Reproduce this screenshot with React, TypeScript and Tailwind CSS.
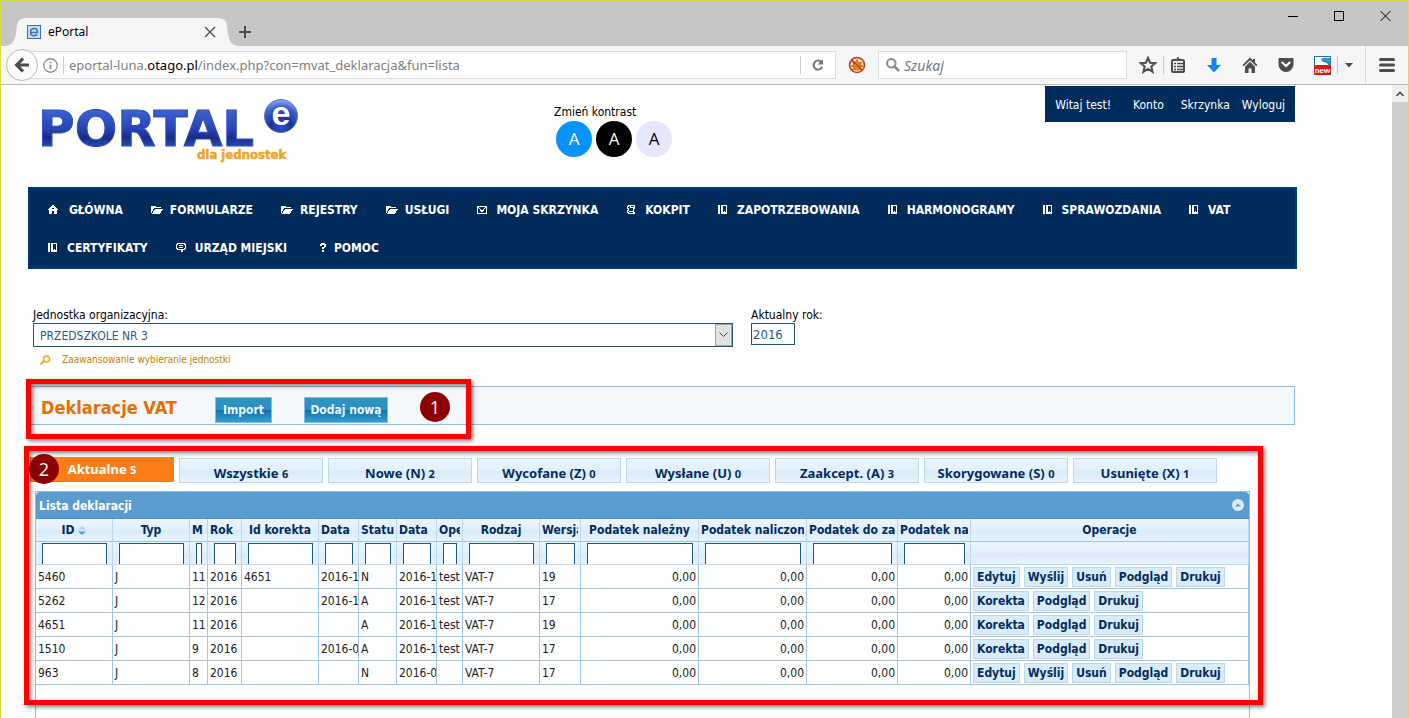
import type { ReactNode } from 'react';
import { clsx } from 'clsx';

type NavIconName = 'home' | 'folder' | 'mail' | 'script' | 'book' | 'chat' | 'help';

const navItems: { label: string; icon: NavIconName }[] = [
  { label: 'GŁÓWNA', icon: 'home' },
  { label: 'FORMULARZE', icon: 'folder' },
  { label: 'REJESTRY', icon: 'folder' },
  { label: 'USŁUGI', icon: 'folder' },
  { label: 'MOJA SKRZYNKA', icon: 'mail' },
  { label: 'KOKPIT', icon: 'script' },
  { label: 'ZAPOTRZEBOWANIA', icon: 'book' },
  { label: 'HARMONOGRAMY', icon: 'book' },
  { label: 'SPRAWOZDANIA', icon: 'book' },
  { label: 'VAT', icon: 'book' },
  { label: 'CERTYFIKATY', icon: 'book' },
  { label: 'URZĄD MIEJSKI', icon: 'chat' },
  { label: 'POMOC', icon: 'help' },
];

const tabs = [
  { label: 'Aktualne', count: 5 },
  { label: 'Wszystkie', count: 6 },
  { label: 'Nowe (N)', count: 2 },
  { label: 'Wycofane (Z)', count: 0 },
  { label: 'Wysłane (U)', count: 0 },
  { label: 'Zaakcept. (A)', count: 3 },
  { label: 'Skorygowane (S)', count: 0 },
  { label: 'Usunięte (X)', count: 1 },
];

const columns = [
  { label: 'ID', width: 'w-[77px]', center: true },
  { label: 'Typ', width: 'w-[77px]', center: true },
  { label: 'M', width: 'w-[18px]' },
  { label: 'Rok', width: 'w-[34px]' },
  { label: 'Id korekta', width: 'w-[77px]', center: true },
  { label: 'Data', width: 'w-[40px]' },
  { label: 'Status', width: 'w-[38px]' },
  { label: 'Data', width: 'w-[40px]' },
  { label: 'Operator', width: 'w-[26px]' },
  { label: 'Rodzaj', width: 'w-[77px]', center: true },
  { label: 'Wersja', width: 'w-[41px]' },
  { label: 'Podatek należny', width: 'w-[118px]', center: true },
  { label: 'Podatek naliczony', width: 'w-[108px]' },
  { label: 'Podatek do zapłaty', width: 'w-[91px]' },
  { label: 'Podatek nadpłacony', width: 'w-[73px]' },
];

const editable = ['Edytuj', 'Wyślij', 'Usuń', 'Podgląd', 'Drukuj'];
const locked = ['Korekta', 'Podgląd', 'Drukuj'];

const rows = [
  { cells: ['5460', 'J', '11', '2016', '4651', '2016-1', 'N', '2016-1', 'test', 'VAT-7', '19'], actions: editable },
  { cells: ['5262', 'J', '12', '2016', '', '2016-1', 'A', '2016-1', 'test', 'VAT-7', '17'], actions: locked },
  { cells: ['4651', 'J', '11', '2016', '', '', 'A', '2016-1', 'test', 'VAT-7', '19'], actions: locked },
  { cells: ['1510', 'J', '9', '2016', '', '2016-0', 'A', '2016-1', 'test', 'VAT-7', '17'], actions: locked },
  { cells: ['963', 'J', '8', '2016', '', '', 'N', '2016-0', '', 'VAT-7', '17'], actions: editable },
];

const amounts = ['0,00', '0,00', '0,00', '0,00'];

const headerGradient = 'bg-[linear-gradient(#e9f4fd_0%,#e3f0fb_48%,#d8ebf9_52%,#e6f3fd_100%)]';

function NavIcon({ name }: { name: NavIconName }) {
  const shapes: Record<NavIconName, ReactNode> = {
    home: <path d="M4 0h2v1h1v1h1v1h1v1h1v1H9v4H6V6H4v3H1V5H0V4h1V3h1V2h1V1h1zM4 3h2v1H4z" fill="currentColor" fillRule="evenodd" />,
    folder: <path d="M0 1h5v1h5v1H3v1H2v2H1v2H0zM4 4h8v1h-1v1h-1v2H9v1H1V8h1V6h1V5h1z" fill="currentColor" />,
    mail: <path d="M.5 1.500h9v7h-9zM1.500 2.500l3.500 4L8.500 2.500" fill="none" stroke="currentColor" />,
    script: <path d="M2.500 3.500h-1v-2h1v-1h6v3h-1v4h1v1h-6v-1h-1v-2h1zM4.500.5v2h3M2.500 6.500h4" fill="none" stroke="currentColor" />,
    book: <path d="M0 0h2v9H0zM3 0h6v9H3zM5 1v6h1V6h1v1h1V1z" fill="currentColor" fillRule="evenodd" />,
    chat: <path d="M1.500.5h7v1h1v4h-1v1h-2v2h-1v-2h-4v-1h-1v-4h1zM3 2.500h4M3 4.500h4" fill="none" stroke="currentColor" />,
    help: <path d="M6 0h4v1h1v3h-1v1H9v1H7V4h2V2H7v1H5V1h1zM7 7h2v2H7z" fill="currentColor" />,
  };

  return (
    <svg viewBox="0 0 12 10" width="12" height="10" shapeRendering="crispEdges" className={clsx('shrink-0', name === 'home' && 'mr-0.5')} aria-hidden="true">
      {shapes[name]}
    </svg>
  );
}

function Logo() {
  return (
    <svg viewBox="0 0 262 72" width="262" height="72" role="img" aria-label="ePortal dla jednostek">
      <defs>
        <linearGradient id="logo-blue" x1="0" y1="0" x2="0" y2="1">
          <stop offset="0.2" stopColor="#3a5fd0" />
          <stop offset="0.5" stopColor="#2744b4" />
          <stop offset="0.65" stopColor="#182c85" />
          <stop offset="0.85" stopColor="#2d56c4" />
        </linearGradient>
        <radialGradient id="logo-ball" cx="0.5" cy="0.85" r="0.9">
          <stop offset="0" stopColor="#2a50c8" />
          <stop offset="0.35" stopColor="#1c3596" />
          <stop offset="0.7" stopColor="#3a62cf" />
          <stop offset="1" stopColor="#a9bdf0" />
        </radialGradient>
      </defs>
      <text x="-4" y="49" fontFamily="'DejaVu Sans', sans-serif" fontWeight="700" fontSize="50" fill="url(#logo-blue)" stroke="#2d50bd" strokeWidth="1">
        PORTAL
      </text>
      <circle cx="239" cy="19" r="18" fill="#ffffff" />
      <circle cx="239" cy="19" r="16.500" fill="url(#logo-ball)" stroke="#5577c8" />
      <text x="239" y="28" textAnchor="middle" fontFamily="'Liberation Sans', sans-serif" fontWeight="700" fontSize="34" fill="#ffffff">
        e
      </text>
      <text x="155" y="62" fontFamily="'DejaVu Sans Condensed', 'DejaVu Sans', sans-serif" fontWeight="700" fontSize="13" fill="#eda52a" stroke="#eda52a" strokeWidth="0.5">
        dla jednostek
      </text>
    </svg>
  );
}

function BrowserTabs() {
  return (
    <div className="flex h-[45px] items-end bg-[#c6c6c6] text-[#4a4a4a]">
      <svg viewBox="0 0 22 28" width="22" height="28" className="ml-1 shrink-0" aria-hidden="true">
        <path d="M0 28C14 27 10 10 13 4c2-3 5-4 9-4v28z" fill="#f6f6f6" />
      </svg>
      <div className="flex h-7 w-[190px] items-center bg-[#f6f6f6]">
        <svg viewBox="0 0 14 14" width="14" height="14" aria-hidden="true">
          <rect x="0.5" y="0.5" width="13" height="13" fill="#c9dcf5" stroke="#3c6db5" />
          <path d="M4 7.500h6.500c0-2.500-1.300-4-3.500-4S3.500 5 3.500 7.300 5 10.700 7 10.700c1.500 0 2.600-.5 3.200-1.500" fill="none" stroke="#3a74a8" strokeWidth="1.500" />
        </svg>
        <span className="ml-[7px] font-['Noto_Sans',sans-serif] text-xs text-black">ePortal</span>
        <button type="button" aria-label="Zamknij kartę" className="mr-px ml-auto">
          <svg viewBox="0 0 12 12" width="12" height="12" stroke="currentColor" strokeWidth="1.300">
            <path d="M1 1l10 10M11 1L1 11" />
          </svg>
        </button>
      </div>
      <svg viewBox="0 0 22 28" width="22" height="28" className="shrink-0" aria-hidden="true">
        <path d="M22 28C8 27 12 10 9 4 7 1 4 0 0 0v28z" fill="#f6f6f6" />
      </svg>
      <button type="button" aria-label="Nowa karta" className="mb-2">
        <svg viewBox="0 0 12 12" width="12" height="12" stroke="currentColor" strokeWidth="2">
          <path d="M6 0v12M0 6h12" />
        </svg>
      </button>
      <div className="mr-[17px] ml-auto flex gap-[35px] self-start pt-[9px] text-black">
        <svg viewBox="0 0 11 12" width="11" height="12" stroke="currentColor" shapeRendering="crispEdges">
          <path d="M0 6.500h10" />
        </svg>
        <svg viewBox="0 0 11 12" width="11" height="12" fill="none" stroke="currentColor" shapeRendering="crispEdges">
          <rect x="0.5" y="1.500" width="9" height="9" />
        </svg>
        <svg viewBox="0 0 11 12" width="11" height="12" stroke="currentColor">
          <path d="M.5 1l10 10M10.500 1L.5 11" />
        </svg>
      </div>
    </div>
  );
}

function Toolbar() {
  return (
    <div className="flex h-[39px] items-center border-b border-[#bcbcbc] bg-[#f6f6f6] font-['Noto_Sans',sans-serif] text-[#4d4d4d]">
      <button type="button" aria-label="Wstecz" className="z-10 ml-[5px] flex size-8 shrink-0 items-center justify-center rounded-full border border-[#b9b9b9] bg-[#fbfbfb]">
        <svg viewBox="0 0 16 16" width="16" height="16" fill="none" stroke="currentColor" strokeWidth="3.200">
          <path d="M9 1.500L2.700 8 9 14.500M3 8h12" />
        </svg>
      </button>
      <div className="-ml-2 flex h-7 flex-1 items-center border border-[#dcdcdc] bg-white pl-3">
        <svg viewBox="0 0 14 14" width="15" height="15" fill="none" stroke="#8f8f8f" strokeWidth="1.200">
          <circle cx="7" cy="7" r="6.300" />
          <path d="M7 6v4.500M7 3.300v1.500" strokeWidth="1.600" />
        </svg>
        <div className="mr-[5px] ml-[5px] h-[18px] w-px bg-[#cfcfcf]" />
        <div className="pt-0.5 text-[13px] text-[#808080]">
          eportal-luna.<span className="text-black">otago.pl</span>/index.php?con=mvat_deklaracja&amp;fun=lista
        </div>
        <button type="button" aria-label="Odśwież" className="ml-auto flex h-[18px] items-center border-l border-[#cfcfcf] px-[10px]">
          <svg viewBox="0 0 14 14" width="14" height="14" fill="none" stroke="#777777" strokeWidth="2">
            <path d="M10.600 4.200A4.500 4.500 0 1 0 11.200 9" />
            <path d="M12 1v5.500H6.500z" fill="#777777" stroke="none" />
          </svg>
        </button>
      </div>
      <svg viewBox="0 0 18 18" width="18" height="18" className="mx-3 shrink-0" aria-hidden="true">
        <circle cx="9" cy="9" r="7.200" fill="#f3e3cf" />
        <ellipse cx="9" cy="10" rx="4.500" ry="4.800" fill="#e08a10" />
        <path d="M4 6l3 2M3 10h3M4 14l3-2M14 6l-3 2M15 10h-3M14 14l-3-2M9 3v3" stroke="#b3721c" strokeWidth="1.400" />
        <circle cx="9" cy="9" r="7.500" fill="none" stroke="#c9332b" strokeWidth="1.600" />
        <path d="M3.700 3.700l10.600 10.600" stroke="#c9332b" strokeWidth="1.600" />
      </svg>
      <label className="flex h-7 w-[249px] items-center border border-[#dcdcdc] bg-white pl-[7px]">
        <svg viewBox="0 0 14 14" width="14" height="14" fill="none" stroke="#8b8b8b" strokeWidth="2" className="shrink-0">
          <circle cx="5.300" cy="5.300" r="4.200" />
          <path d="M8.500 8.500l4.500 4.500" strokeWidth="2.600" />
        </svg>
        <input aria-label="Szukaj" placeholder="Szukaj" className="ml-1 w-full bg-transparent pt-0.5 text-sm italic outline-none placeholder:text-[#7a7a7a]" />
      </label>
      <div className="flex shrink-0 items-center pl-3">
        <svg viewBox="0 0 18 18" width="18" height="18" fill="none" stroke="currentColor" strokeWidth="2">
          <path d="M9 1.900l2.100 4.900 5.200.4-4 3.400 1.300 5.200L9 13l-4.600 2.800 1.300-5.200-4-3.400 5.200-.4z" />
        </svg>
        <div className="mx-[6px] h-[18px] w-px bg-[#c6c6c6]" />
        <svg viewBox="0 0 16 18" width="16" height="18" fill="none" stroke="currentColor" strokeWidth="2">
          <rect x="2" y="4" width="12" height="12" rx="1" />
          <path d="M5 3.500h6M8 1v3M4 7.500h2M7 7.500h6M4 10.500h2M7 10.500h6M4 13.500h2M7 13.500h6" strokeWidth="1.700" />
        </svg>
        <svg viewBox="0 0 16 18" width="16" height="18" className="ml-5">
          <path d="M5.500 2h5v7H15l-7 7.500L1 9h4.500z" fill="#1a82ee" />
        </svg>
        <svg viewBox="0 0 16 18" width="16" height="18" className="ml-5" fill="currentColor">
          <path d="M8 1.500L.5 9l1.300 1.300L8 4.200l6.200 6.100L15.500 9l-2.500-2.500V3h-2v1.500zM8 5.800l-5 5V17h3.500v-4.500h3V17H13v-6.200z" />
        </svg>
        <svg viewBox="0 0 16 18" width="16" height="18" className="ml-5">
          <path d="M1.500 2h13a1 1 0 0 1 1 1v5.500a7.500 7.500 0 0 1-15 0V3a1 1 0 0 1 1-1z" fill="#4d4d4d" />
          <path d="M4.300 6.500L8 10l3.700-3.500" fill="none" stroke="#ffffff" strokeWidth="2" strokeLinecap="round" />
        </svg>
        <svg viewBox="0 0 17 19" width="17" height="19" className="ml-5">
          <rect width="17" height="19" fill="#1579b8" />
          <path d="M1 1h15v1.500C10 2 6 3 8 5c2 1.500 6 1 7 5H1z" fill="#ffffff" />
          <path d="M7 3c2-1.500 5-1.500 9-1v7c-1-3-4-3.500-6-4-1.500-.3-3-.8-3-2z" fill="#2f9bd0" />
          <rect x="0" y="9" width="17" height="10" rx="2" fill="#ee1111" />
          <text x="8.500" y="17" textAnchor="middle" fontFamily="'Liberation Sans', sans-serif" fontWeight="700" fontSize="8" fill="#ffffff">
            new
          </text>
        </svg>
        <div className="ml-[6px] h-[18px] w-px bg-[#c6c6c6]" />
        <svg viewBox="0 0 8 5" width="8" height="5" className="ml-[7px]">
          <path d="M0 0h8L4 4.500z" fill="#4d4d4d" />
        </svg>
        <button type="button" aria-label="Menu" className="ml-3 flex h-[38px] items-center border-l border-[#dadada] pr-[13px] pl-[13px]">
          <svg viewBox="0 0 16 16" width="16" height="16" stroke="currentColor" strokeWidth="3" strokeLinecap="round">
            <path d="M1.500 2.500h13M1.500 8h13M1.500 13.500h13" />
          </svg>
        </button>
      </div>
    </div>
  );
}

function NumberBadge({ value, className }: { value: number; className: string }) {
  return (
    <span className={clsx("absolute z-20 flex size-[30px] items-center justify-center rounded-full bg-[#8b0000] font-['Open_Sans',sans-serif] text-lg text-white", className)}>
      {value}
    </span>
  );
}

function Highlight({ className }: { className: string }) {
  return <div className={clsx('pointer-events-none absolute z-10 border-5 border-[#fe0000] shadow-[2px_2px_4px_rgba(0,0,0,0.5),inset_2px_2px_4px_rgba(0,0,0,0.5)]', className)} />;
}

function Header() {
  return (
    <header className="flex h-[102px] items-start">
      <div className="w-[526px] shrink-0 pt-3 pl-[14px]">
        <Logo />
      </div>
      <div className="pt-[19px]">
        <p className="leading-4">Zmień kontrast</p>
        <div className="flex gap-1 pt-px pl-0.5 font-['Open_Sans',sans-serif] text-[17px]">
          <button type="button" className="size-9 rounded-full bg-[#0693fb] text-white">A</button>
          <button type="button" className="size-9 rounded-full bg-black text-white">A</button>
          <button type="button" className="size-9 rounded-full bg-[#e4e7fd] text-black">A</button>
        </div>
      </div>
      <div className="mt-px mr-0.5 ml-auto flex h-9 items-center bg-[#002b5b] px-[10px] pt-0.5 text-white">
        <span className="mr-[22px]">Witaj test!</span>
        <a href="#konto" className="mr-[17px]">Konto</a>
        <a href="#skrzynka" className="mr-3">Skrzynka</a>
        <a href="#wyloguj">Wyloguj</a>
      </div>
    </header>
  );
}

function Navigation() {
  return (
    <nav className="flex flex-wrap gap-x-7 border-2 border-[#003d78] bg-[#002b5b] px-[18px] pt-0.5 font-bold text-white">
      {navItems.map((item) => (
        <a key={item.label} href="#nav" className="flex h-[38px] items-center gap-[7px]">
          <NavIcon name={item.icon} />
          {item.label}
        </a>
      ))}
    </nav>
  );
}

function UnitForm() {
  return (
    <form className="flex gap-[18px] pt-[39px] pl-[5px]">
      <div className="w-[700px]">
        <label htmlFor="unit" className="block leading-[15px]">Jednostka organizacyjna:</label>
        <div className="relative">
          <select id="unit" className="block h-6 w-full appearance-none border border-[#1f5876] bg-white pt-px pl-[6px] text-[#2d5a80]">
            <option>PRZEDSZKOLE NR 3</option>
          </select>
          <span className="pointer-events-none absolute inset-y-px right-px flex w-[17px] items-center justify-center border border-[#a5a5a5] bg-[#e2e2e2]">
            <svg viewBox="0 0 9 6" width="9" height="6" fill="none" stroke="#444444">
              <path d="M.5.5l4 4 4-4" />
            </svg>
          </span>
        </div>
        <a href="#zaawansowane" className="flex h-[26px] items-center gap-[11px] pl-[7px] text-[10px] text-[#c08005]">
          <svg viewBox="0 0 11 10" width="11" height="10" fill="none" stroke="#f5a623" strokeWidth="1.500">
            <circle cx="6.500" cy="4" r="3" />
            <path d="M4 6L.5 9.500" strokeWidth="2" />
          </svg>
          Zaawansowanie wybieranie jednostki
        </a>
      </div>
      <div>
        <label htmlFor="year" className="block leading-[15px]">Aktualny rok:</label>
        <input id="year" defaultValue="2016" className="block h-[22px] w-11 border border-[#1f5876] bg-white px-[1px] text-[13px] text-[#2d5a80]" />
      </div>
    </form>
  );
}

function TitleBar() {
  const button = 'h-[26px] border border-[#7cc0e6] bg-[linear-gradient(#2f93c4_0%,#2b8fc1_50%,#0578b0_50%,#3b9aca_100%)] pt-px font-bold whitespace-nowrap text-[#eaf4fb]';

  return (
    <section className="relative mr-0.5 flex h-[39px] items-center border border-[#8cbfe6] bg-[#f4f8fa] pt-2 pl-3">
      <h1 className="w-[174px] pb-1 text-lg font-bold text-[#e17009]">Deklaracje VAT</h1>
      <button type="button" className={clsx(button, 'mr-8 w-[57px]')}>Import</button>
      <button type="button" className={clsx(button, 'w-[84px]')}>Dodaj nową</button>
      <NumberBadge value={1} className="top-[5px] left-[391px]" />
      <Highlight className="-top-2 -left-[3px] h-[60px] w-[445px]" />
    </section>
  );
}

function Declarations() {
  return (
    <section className="relative mt-[32px] mr-[47px] flex flex-1 flex-col">
      <NumberBadge value={2} className="-top-[3px] left-[1px]" />
      <Highlight className="-top-[11px] -right-[13px] -left-1 h-[259px]" />
      <div className="flex gap-[5px] pl-0.5 font-['Noto_Sans',sans-serif] text-[13px] font-bold">
        {tabs.map((tab, i) => (
          <button
            key={tab.label}
            type="button"
            className={clsx(
              'h-[25px] w-36 whitespace-nowrap',
              i === 0 ? 'bg-[#ff7d19] pt-px text-white' : 'mt-px border border-[#bdd8ee] pt-[5px] leading-4 text-[#052c5c]',
              i > 0 && headerGradient,
            )}
          >
            {tab.label} <span className="text-[11px]">{tab.count}</span>
          </button>
        ))}
      </div>
      <div className="mt-2 ml-[7px] flex-1 border border-b-0 border-[#93bfe0] bg-[#fcfdfd]">
        <div className="flex h-[27px] items-center justify-between rounded-t-sm border-b border-[#3d8fd0] bg-[#5b9bcd] pr-[5px] pl-[3px]">
          <h2 className="pt-px font-bold text-white">Lista deklaracji</h2>
          <button type="button" aria-label="Zwiń">
            <svg viewBox="0 0 12 12" width="12" height="12">
              <circle cx="6" cy="6" r="6" fill="#dcebf8" />
              <path d="M3 7.500l3-3 3 3z" fill="#5b9bcd" />
            </svg>
          </button>
        </div>
        <table className="w-full table-fixed border-separate border-spacing-0 bg-white">
          <thead className="text-[#052c5c]">
            <tr>
              {columns.map((col, i) => (
                <th key={i} className={clsx(col.width, headerGradient, 'h-[23px] border-r border-b border-r-[#bdd8ee] border-b-[#a9bfd2] px-0.5')}>
                  <div className={clsx('overflow-hidden whitespace-nowrap', col.center ? 'flex items-center justify-center gap-1' : 'text-left')}>
                    {col.label}
                    {i === 0 && (
                      <svg viewBox="0 0 8 9" width="8" height="9" aria-hidden="true">
                        <path d="M0 3.500L4 0l4 3.500z" fill="#b5d3ec" />
                        <path d="M0 5.500L4 9l4-3.500z" fill="#5b9bcd" />
                      </svg>
                    )}
                  </div>
                </th>
              ))}
              <th className={clsx(headerGradient, 'h-[23px] border-r border-b border-r-[#bdd8ee] border-b-[#a9bfd2]')}>Operacje</th>
            </tr>
            <tr>
              {columns.map((col, i) => (
                <td key={i} className={clsx(headerGradient, 'border-r border-b border-[#bdd8ee] p-0')}>
                  <div className="h-[22px] overflow-hidden pt-px pr-[5px] pl-[6px]">
                    <input aria-label={`Filtr ${col.label}`} className="block h-6 w-full border border-[#1f5876] bg-white px-0" />
                  </div>
                </td>
              ))}
              <td className={clsx(headerGradient, 'border-r border-b border-[#bdd8ee]')} />
            </tr>
          </thead>
          <tbody className="text-[#222222]">
            {rows.map((row) => (
              <tr key={row.cells[0]}>
                {row.cells.map((cell, i) => (
                  <td key={i} className="h-6 overflow-hidden border-r border-b border-[#9fc8e4] py-0 pr-0 pl-0.5 whitespace-nowrap">
                    {cell}
                  </td>
                ))}
                {amounts.map((amount, i) => (
                  <td key={i} className="h-6 border-r border-b border-[#9fc8e4] py-0 pr-0.5 text-right">
                    {amount}
                  </td>
                ))}
                <td className="h-6 border-r border-b border-[#9fc8e4] py-0 pl-0.5">
                  <div className="flex gap-1">
                    {row.actions.map((action) => (
                      <button key={action} type="button" className="h-5 border border-[#bdd8ee] bg-[#d7ebf9] px-[3px] leading-4 font-bold text-[#052c5c]">
                        {action}
                      </button>
                    ))}
                  </div>
                </td>
              </tr>
            ))}
          </tbody>
        </table>
      </div>
    </section>
  );
}

export default function App() {
  return (
    <div className="flex h-screen flex-col overflow-hidden border-x border-t border-[#d9dd45] bg-white">
      <BrowserTabs />
      <Toolbar />
      <div className="flex min-h-0 flex-1">
        <main className="flex min-w-0 flex-1 flex-col overflow-hidden pr-[95px] pl-[27px] font-['DejaVu_Sans_Condensed','DejaVu_Sans',sans-serif] text-xs text-black">
          <Header />
          <Navigation />
          <UnitForm />
          <div className="h-[13px] shrink-0" />
          <TitleBar />
          <Declarations />
        </main>
        <div className="w-4 shrink-0 bg-[#cdcdcd]">
          <div className="flex h-[17px] items-center justify-center bg-[#f0f0f0]">
            <svg viewBox="0 0 8 6" width="8" height="6" fill="none" stroke="#505050" strokeWidth="1.600">
              <path d="M.5 5L4 1.500 7.500 5" />
            </svg>
          </div>
        </div>
      </div>
    </div>
  );
}
